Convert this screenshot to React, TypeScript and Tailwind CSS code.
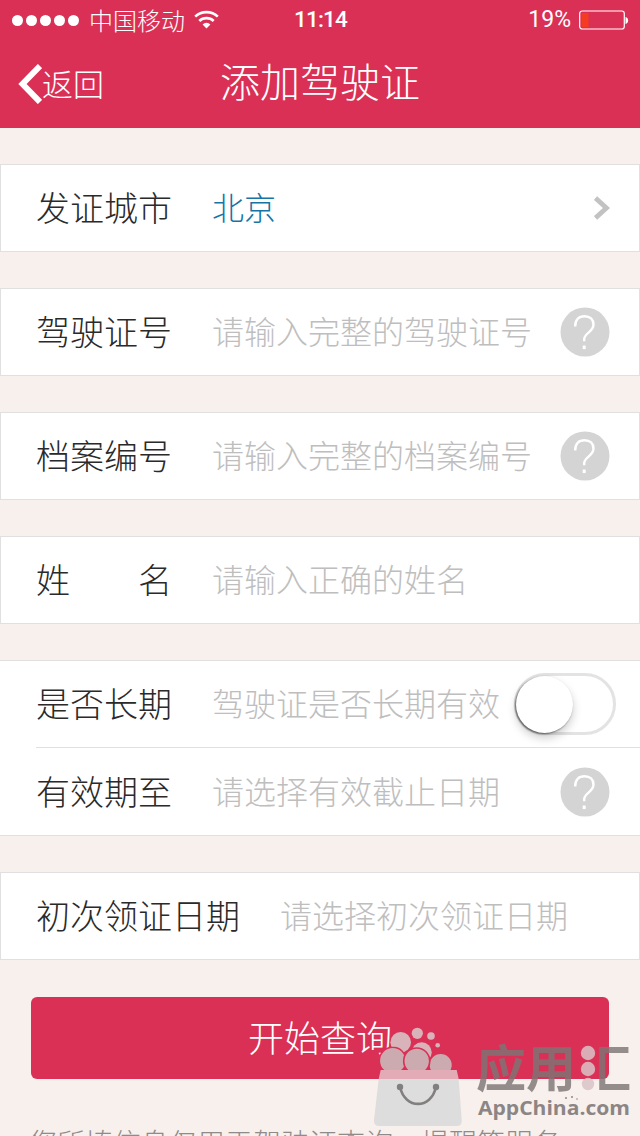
import type { ReactNode } from 'react';
import clsx from 'clsx';

interface FieldProps {
  label: ReactNode;
  value: string;
  filled?: boolean;
  wide?: boolean;
  children?: ReactNode;
}

function Field({ label, value, filled, wide, children }: FieldProps) {
  return (
    <div className="flex h-[86px] items-center pr-[29px] pl-[35px]">
      <div
        className={clsx(
          'mr-10 flex shrink-0 justify-between pb-[2px] text-[34px] leading-none text-[#2a2a2a]',
          wide ? 'w-[204px]' : 'w-[136px]'
        )}
      >
        {label}
      </div>
      <div
        className={clsx(
          'flex-1 pb-1 text-[32px] leading-none whitespace-nowrap',
          filled ? 'text-[#1874a4]' : 'text-[#bebebe]'
        )}
      >
        {value}
      </div>
      {children}
    </div>
  );
}

function Card({ children }: { children: ReactNode }) {
  return <section className="border border-[#e0e0e0] bg-white">{children}</section>;
}

function HelpIcon() {
  return (
    <svg className="h-[50px] w-[50px] shrink-0" viewBox="0 0 50 50" fill="none">
      <circle cx="25" cy="25" r="24.5" fill="#d4d4d4" />
      <path
        d="M15.2 19.5C15 12.5 19 9.2 24.5 9.2c5.5 0 9 3.3 9 8.300 0 7.600-9.300 8.400-9.300 14.800v2"
        stroke="white"
        strokeWidth="2.4"
      />
      <path d="M24.200 38.500v3.600" stroke="white" strokeWidth="3" />
    </svg>
  );
}

function Toggle() {
  return (
    <div className="-mr-[6px] h-[62px] w-[102px] shrink-0 rounded-full border-[3px] border-[#e3e3e3] bg-white">
      <div className="-ml-px h-[57px] w-[57px] rounded-full bg-white shadow-[0_5px_10px_rgba(0,0,0,0.2),-1px_1px_2px_rgba(0,0,0,0.55)]" />
    </div>
  );
}

function StatusBar() {
  return (
    <div className="grid h-10 grid-cols-[1fr_auto_1fr] items-center pr-[11px] pl-3">
      <div className="flex items-center">
        <div className="flex gap-[3px]">
          {[0, 1, 2, 3, 4].map((dot) => (
            <span key={dot} className="h-[11px] w-[11px] rounded-full bg-white" />
          ))}
        </div>
        <span className="ml-[10px] text-[24px] leading-none">中国移动</span>
        <svg className="ml-[9px] h-[20px] w-[25px]" viewBox="0 0 25 20" fill="none" stroke="white">
          <path d="M1.2 6.6c6.3-6 16.3-6 22.6 0" strokeWidth="2.6" />
          <path d="M5.3 11c4-3.8 10.4-3.8 14.4 0" strokeWidth="2.6" />
          <path d="M8.6 14.4a5.5 5.5 0 0 1 7.8 0L12.5 18.5Z" fill="white" stroke="none" />
        </svg>
      </div>
      <span className="font-['Roboto'] text-[22.5px] font-medium tracking-[-0.8px]">11:14</span>
      <div className="flex items-center justify-end">
        <span className="font-['Roboto'] text-[23px] font-normal">19%</span>
        <svg className="ml-2 h-5 w-[50px]" viewBox="0 0 50 20" fill="none">
          <rect x="0.7" y="1" width="44.6" height="18" rx="2.5" stroke="white" strokeWidth="1.2" />
          <rect x="2.5" y="3" width="7" height="14" fill="#f53b20" />
          <path d="M46.5 7c3.5.5 3.5 6.5 0 7Z" fill="white" />
        </svg>
      </div>
    </div>
  );
}

function Watermark() {
  return (
    <svg className="absolute top-[1020px] left-[370px] h-[116px] w-[270px]" viewBox="0 0 270 116">
      {/* bubbles, back to front */}
      <g fill="#d9b3ba">
        <circle cx="30.7" cy="22.3" r="10.3" />
        <circle cx="47.3" cy="13.3" r="5.6" />
        <circle cx="61" cy="16" r="3.8" />
        <circle cx="67.7" cy="25.3" r="2.3" />
        <circle cx="51.7" cy="32.3" r="10" />
      </g>
      <g className="[clip-path:inset(0_0_2.5px_0)]" fill="#ccabb0" stroke="#db3056" strokeWidth="1.6">
        <circle cx="70.7" cy="45" r="11.8" />
        <circle cx="22.7" cy="40.7" r="13.4" />
        <circle cx="46.7" cy="41" r="13" />
      </g>
      <path d="M10.7 50h76l2 9H8.700Z" fill="#e2abb6" />
      <path d="M8.700 59h80l3 41q.500 6-5 6H9.500q-6 0-5.500-6Z" fill="#dedddd" />
      <path d="M30 67c5 22.500 31 22.500 36 0" fill="none" stroke="#827f7f" strokeWidth="2.6" />
      <circle cx="30" cy="67" r="3.2" fill="#827f7f" />
      <circle cx="66" cy="67" r="3.2" fill="#827f7f" />

      <g className="font-['Noto_Sans_CJK_SC'] font-bold" fill="#7d7575" fillOpacity="0.82" fontSize="50">
        <text x="106" y="67">应用</text>
        <text x="213" y="67" textLength="48" lengthAdjust="spacingAndGlyphs" className="[clip-path:inset(0_0_0_16px)]">
          汇
        </text>
      </g>
      <g fill="#d9c3c7" fillOpacity="0.85">
        <circle cx="218" cy="33" r="7.2" />
        <circle cx="218" cy="49" r="7.2" />
        <circle cx="218" cy="64" r="6.2" />
      </g>
      <g fill="#8d8787">
        <circle cx="196" cy="78" r="1" />
        <circle cx="202" cy="77" r="1" />
        <circle cx="207" cy="79" r="0.8" />
      </g>
      <text
        x="108"
        y="95"
        className="font-['Open_Sans'] font-bold"
        fill="#8c8585"
        fontSize="20"
        textLength="152"
        lengthAdjust="spacingAndGlyphs"
      >
        AppChina.com
      </text>
    </svg>
  );
}

export default function App() {
  return (
    <div className="relative h-[1136px] w-[640px] overflow-hidden bg-[#f7f0ed] font-['Noto_Sans_CJK_SC',sans-serif] font-light">
      <header className="h-32 bg-[#db3056] text-white">
        <StatusBar />
        <div className="grid h-[88px] grid-cols-[1fr_auto_1fr] items-center px-[18px]">
          <button className="flex items-center">
            <svg className="h-10 w-6" viewBox="0 0 24 40" fill="none" stroke="white" strokeWidth="6">
              <path d="M22 2 4.500 20 22 38" />
            </svg>
            <span className="pb-1 text-[31px] leading-none">返回</span>
          </button>
          <h1 className="pb-[9px] text-[40px] leading-none font-light">添加驾驶证</h1>
        </div>
      </header>

      <main className="flex flex-col gap-9 pt-9">
        <Card>
          <Field label="发证城市" value="北京" filled>
            <svg className="h-6 w-4" viewBox="0 0 16 24" fill="none" stroke="#c2c2c2" strokeWidth="4.8">
              <path d="m1.5 2 11 10-11 10" />
            </svg>
          </Field>
        </Card>
        <Card>
          <Field label="驾驶证号" value="请输入完整的驾驶证号">
            <HelpIcon />
          </Field>
        </Card>
        <Card>
          <Field label="档案编号" value="请输入完整的档案编号">
            <HelpIcon />
          </Field>
        </Card>
        <Card>
          <Field
            label={
              <>
                <span>姓</span>
                <span>名</span>
              </>
            }
            value="请输入正确的姓名"
          />
        </Card>

        {/* 有效期 */}
        <section className="border-y border-[#e0e0e0] bg-white px-px">
          <Field label="是否长期" value="驾驶证是否长期有效">
            <Toggle />
          </Field>
          <div className="-mr-px ml-[35px] h-[2px] border-t border-[#e0e0e0]" />
          <Field label="有效期至" value="请选择有效截止日期">
            <HelpIcon />
          </Field>
        </section>

        <Card>
          <Field label="初次领证日期" value="请选择初次领证日期" wide />
        </Card>
      </main>

      <div className="px-[31px] pt-[37px]">
        <button className="block h-[82px] w-full rounded-[6px] bg-[#db3056] pb-1 text-[36px] leading-none text-white">
          开始查询
        </button>
        <p className="mt-[49px] -ml-[2px] text-[28px] leading-none whitespace-nowrap text-[#8f8b8a]">
          您所填信息仅用于驾驶证查询、提醒等服务
        </p>
      </div>

      <Watermark />
    </div>
  );
}
